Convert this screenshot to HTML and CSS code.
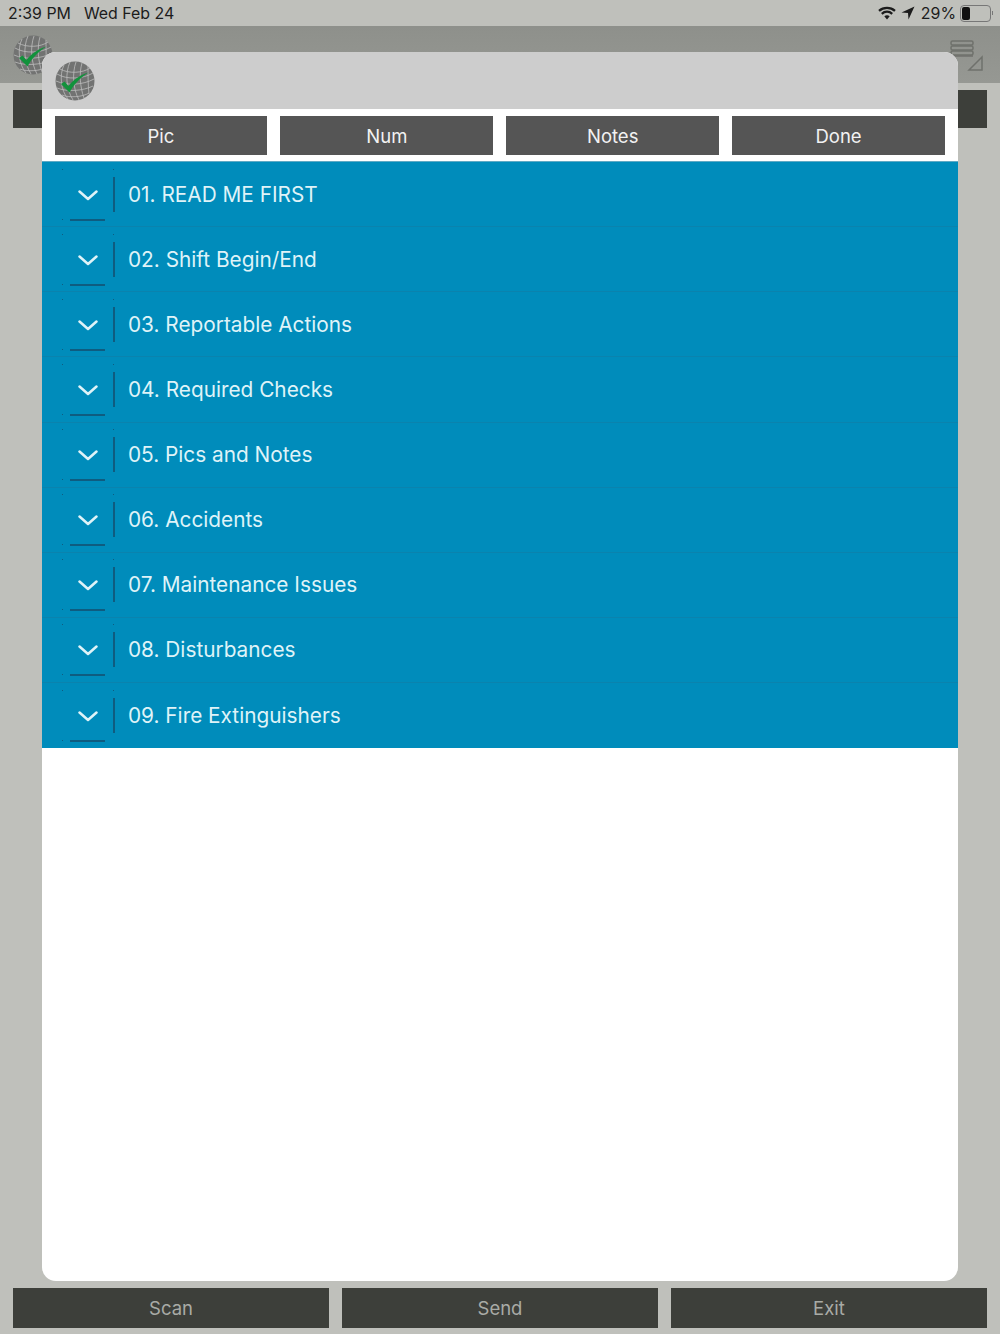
FILE: index.html
```html
<!DOCTYPE html>
<html lang="en">
<head>
    <meta charset="UTF-8">
    <meta name="viewport" content="width=device-width, initial-scale=1.0">
    <title>Checklist</title>
    <link rel="stylesheet" href="styles.css">
</head>
<body>
    <svg class="defs" width="0" height="0">
        <symbol id="globe" viewBox="0 0 40 40">
            <circle cx="20" cy="20" r="19.500" fill="#727372"/>
            <g fill="none" stroke="#bcbdbc" stroke-width="0.800">
                <path d="M5 8C14 13 28 12 35 7M2 13C12 19 28 18 38 12M1 20C12 25 28 24 39 18M2 27C12 31 28 30 38 25M7 34C14 37 28 36 34 32"/>
                <path d="M9 4C4 14 6 30 13 38M15 1C10 12 11 28 18 39M21 1C17 12 18 28 24 39M27 2C24 12 25 26 29 37M33 5C33 14 33 24 34 33"/>
            </g>
            <path d="M6 23L9.500 20.500L13.500 25C18 19 25 14 33.500 11.500C25 17 19 23 14.500 31.500Z" fill="#12923c"/>
        </symbol>
    </svg>

    <div class="status-bar">
        <div class="status-left">
            <span>2:39 PM</span>
            <span>Wed Feb 24</span>
        </div>
        <div class="status-right">
            <svg width="18" height="14" viewBox="0 0 18 14">
                <g fill="none" stroke="#1c1c1c" stroke-width="2.300">
                    <path d="M1 4.800C5.500 0.800 12.500 0.800 17 4.800"/>
                    <path d="M3.800 7.800C6.800 5 11.200 5 14.200 7.800"/>
                </g>
                <path d="M6.300 10.200C8 9 10 9 11.700 10.200L9 13.500Z" fill="#1c1c1c"/>
            </svg>
            <svg class="location" width="14" height="14" viewBox="0 0 14 14">
                <path d="M13.500 0.500L0.500 6.500L7 7L7.500 13.500Z" fill="#1c1c1c"/>
            </svg>
            <span>29%</span>
            <div class="battery"><div class="battery-level"></div></div>
            <div class="battery-tip"></div>
        </div>
    </div>

    <div class="top-bar">
        <svg class="top-globe" width="40" height="40"><use href="#globe"/></svg>
        <svg class="top-menu" width="34" height="32" viewBox="0 0 34 32">
            <g fill="none" stroke="#6f716c" stroke-width="1.500">
                <rect x="1" y="1" width="22" height="4" rx="1.500"/>
                <rect x="1" y="6" width="22" height="4" rx="1.500"/>
                <rect x="1" y="11" width="22" height="4" rx="1.500"/>
                <path d="M3 16H23"/>
                <path d="M32 17V30H19Z"/>
            </g>
        </svg>
    </div>

    <div class="under-row"></div>

    <div class="bottom-bar">
        <div class="bottom-btn">Scan</div>
        <div class="bottom-btn">Send</div>
        <div class="bottom-btn">Exit</div>
    </div>

    <div class="modal">
        <div class="modal-head">
            <svg width="40" height="40"><use href="#globe"/></svg>
        </div>
        <div class="tabs">
            <div class="tab">Pic</div>
            <div class="tab">Num</div>
            <div class="tab">Notes</div>
            <div class="tab">Done</div>
        </div>
        <div class="list">
            <div class="item"><div class="toggle"><svg class="chev" width="20" height="11" viewBox="0 0 20 11"><path d="M1.500 1.500L10 9L18.500 1.500"/></svg></div><span>01. READ ME FIRST</span></div>
            <div class="item"><div class="toggle"><svg class="chev" width="20" height="11" viewBox="0 0 20 11"><path d="M1.500 1.500L10 9L18.500 1.500"/></svg></div><span>02. Shift Begin/End</span></div>
            <div class="item"><div class="toggle"><svg class="chev" width="20" height="11" viewBox="0 0 20 11"><path d="M1.500 1.500L10 9L18.500 1.500"/></svg></div><span>03. Reportable Actions</span></div>
            <div class="item"><div class="toggle"><svg class="chev" width="20" height="11" viewBox="0 0 20 11"><path d="M1.500 1.500L10 9L18.500 1.500"/></svg></div><span>04. Required Checks</span></div>
            <div class="item"><div class="toggle"><svg class="chev" width="20" height="11" viewBox="0 0 20 11"><path d="M1.500 1.500L10 9L18.500 1.500"/></svg></div><span>05. Pics and Notes</span></div>
            <div class="item"><div class="toggle"><svg class="chev" width="20" height="11" viewBox="0 0 20 11"><path d="M1.500 1.500L10 9L18.500 1.500"/></svg></div><span>06. Accidents</span></div>
            <div class="item"><div class="toggle"><svg class="chev" width="20" height="11" viewBox="0 0 20 11"><path d="M1.500 1.500L10 9L18.500 1.500"/></svg></div><span>07. Maintenance Issues</span></div>
            <div class="item"><div class="toggle"><svg class="chev" width="20" height="11" viewBox="0 0 20 11"><path d="M1.500 1.500L10 9L18.500 1.500"/></svg></div><span>08. Disturbances</span></div>
            <div class="item"><div class="toggle"><svg class="chev" width="20" height="11" viewBox="0 0 20 11"><path d="M1.500 1.500L10 9L18.500 1.500"/></svg></div><span>09. Fire Extinguishers</span></div>
        </div>
    </div>
</body>
</html>
```

FILE: styles.css
```css
html, body { height: 100%; }
body { margin: 0; height: 1334px; overflow: hidden; position: relative; display: flex; flex-direction: column; background: #bfc0bb; font-family: Inter, "Noto Sans", sans-serif; }
.defs { position: absolute; }

.status-bar { height: 26px; display: flex; justify-content: space-between; align-items: center; padding: 0 7px 0 8px; font-size: 15.900px; color: #1c1c1c; }
.status-left { display: flex; gap: 13px; }
.status-right { display: flex; align-items: center; gap: 4px; }
.location { margin: 0 2px 0 1px; }
.battery { width: 27px; height: 13px; border: 1px solid #777; border-radius: 4px; padding: 1px; }
.battery-level { width: 8px; height: 100%; background: #111; border-radius: 2px; }
.battery-tip { width: 1px; height: 4px; background: #777; margin-left: -3px; }

.top-bar { height: 57px; display: flex; justify-content: space-between; padding: 9px 16px 0 13px; box-sizing: border-box; background: linear-gradient(#8e908b, #969893); }
.top-menu { margin-top: 5px; }

.under-row { height: 38px; margin: 7px 13px 0; background: #3d3f3a; }

.bottom-bar { margin-top: auto; margin-bottom: 6px; padding: 0 13px; display: flex; gap: 13px; }
.bottom-btn { flex: 1; height: 40px; display: flex; align-items: center; justify-content: center; background: #3d3f3a; color: #a9aba6; font-size: 18.500px; }

.modal { position: absolute; left: 41.500px; top: 52px; width: 916.500px; height: 1229px; background: #fff; border-radius: 14px; overflow: hidden; }
.modal-head { height: 57px; box-sizing: border-box; padding: 9px 0 0 13px; background: #cdcdcd; }
.tabs { display: flex; gap: 13px; padding: 7px 13px 6px; }
.tab { flex: 1; height: 39px; display: flex; align-items: center; justify-content: center; background: #555; color: #f2f2f2; font-size: 18.500px; }

.list { background: #008cbb; border-top: 1px solid #5fa9c4; }
.item { height: 65.130px; box-sizing: border-box; display: flex; align-items: center; border-bottom: 1px solid #0a83ae; color: #dff3f8; font-size: 20.800px; }
.item:last-child { border-bottom: none; }
.toggle { position: relative; width: 73px; height: 35px; margin-right: 13.500px; border-right: 2px solid #0f5c80; box-sizing: border-box; display: flex; align-items: center; justify-content: flex-end; padding-right: 15px; }
.toggle::before { content: ""; position: absolute; left: 20px; top: -8px; width: 1px; height: 1px; background: #0f5c80; box-shadow: 51px 0 #0f5c80, 0 50px #0f5c80; }
.toggle::after { content: ""; position: absolute; left: 28px; right: 7.500px; bottom: -9px; height: 2px; background: #0f5c80; }
.chev { margin-top: 2px; fill: none; stroke: #dff3f8; stroke-width: 2.500; stroke-linecap: round; stroke-linejoin: round; }
```
